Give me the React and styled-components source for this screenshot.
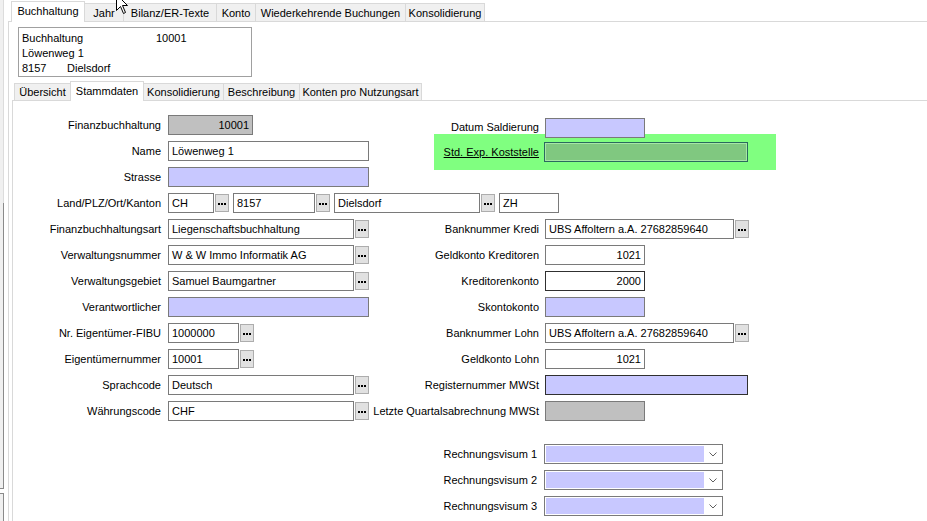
import React from 'react';
import styled, { createGlobalStyle } from 'styled-components';

const GlobalStyle = createGlobalStyle`
  html, body { margin: 0; height: 100%; background: #fff; overflow: hidden; }
  body { font-family: "Liberation Sans", Arial, sans-serif; font-size: 11px; color: #000; }
  #root { height: 100%; }
`;

const LAVENDER = '#c8c8ff';
const GREY = '#c0c0c0';

const Screen = styled.div`
  position: relative;
  display: flex;
  width: 927px;
  height: 521px;
  overflow: hidden;
`;

const SideEdge = styled.div`
  width: 4px;
  margin-right: 4px;
  display: flex;
  flex-direction: column;
`;

const SidePane = styled.div`
  box-sizing: border-box;
  height: ${p => (p.h ? `${p.h}px` : 'auto')};
  flex: ${p => (p.grow ? 1 : 'none')};
  margin-top: ${p => p.mt || 0}px;
  background: #f0f0f0;
  border-right: 1px solid ${p => (p.framed ? '#8a8a8a' : '#dcdcdc')};
  border-bottom: ${p => (p.closed ? '1px solid #8a8a8a' : 'none')};
  border-top: ${p => (p.opened ? '1px solid #8a8a8a' : 'none')};
`;

const Main = styled.div`
  flex: 1;
  display: flex;
  flex-direction: column;
  min-width: 0;
`;

const TabStrip = styled.div`
  display: flex;
  align-items: flex-end;
  height: ${p => p.h}px;
  padding-left: ${p => p.pl}px;
  border-bottom: 1px solid #d9d9d9;
`;

const Tab = styled.div`
  box-sizing: border-box;
  position: relative;
  z-index: ${p => (p.active ? 1 : 0)};
  width: ${p => p.w}px;
  height: ${p => (p.active ? p.h : p.h - 3)}px;
  margin-left: ${p => (p.first ? 0 : -1)}px;
  margin-bottom: ${p => (p.active ? -1 : 0)}px;
  border: 1px solid #d9d9d9;
  border-bottom: none;
  background: ${p => (p.active ? '#fff' : '#f0f0f0')};
  display: flex;
  align-items: center;
  justify-content: center;
  padding-bottom: ${p => (p.active ? 2 : 0)}px;
  white-space: nowrap;
`;

const OuterPanel = styled.div`
  flex: 1;
  display: flex;
  flex-direction: column;
  border-left: 1px solid #d9d9d9;
`;

const InfoBox = styled.div`
  box-sizing: border-box;
  width: 234px;
  height: 50px;
  margin: 5px 0 0 9px;
  padding: 3px 3px 0;
  border: 1px solid #a0a0a0;
  line-height: 15px;
`;

const InfoRow = styled.div`
  display: flex;
  white-space: nowrap;
`;

const InfoCell = styled.span`
  width: ${p => (p.w ? `${p.w}px` : 'auto')};
`;

const InnerTabs = styled.div`
  flex: 1;
  display: flex;
  flex-direction: column;
  margin: 3px 0 0 3px;
`;

const InnerPanel = styled.div`
  flex: 1;
  border-left: 1px solid #d9d9d9;
`;

const Form = styled.div`
  padding-top: 11px;
  display: flex;
  flex-direction: column;
`;

const Row = styled.div`
  display: grid;
  grid-template-columns: 155px 266px 111px 1fr;
  height: 26px;
  align-items: center;
  margin-top: ${p => p.gap || 0}px;
`;

const Label = styled.div`
  grid-column: ${p => p.col || 'auto'};
  display: flex;
  justify-content: flex-end;
  padding-right: ${p => p.pr || 7}px;
  margin-top: ${p => p.low || 0}px;
  white-space: nowrap;
  min-width: 0;
`;

const Field = styled.div`
  grid-column: ${p => p.span || 'auto'};
  display: flex;
  align-items: center;
  margin-top: ${p => p.low || 0}px;
`;

const Box = styled.div`
  box-sizing: border-box;
  position: relative;
  width: ${p => p.w}px;
  height: 20px;
  margin-left: ${p => p.ml || 0}px;
  padding: 0 3px;
  border: 1px solid ${p => (p.dark ? '#303030' : '#7a7a7a')};
  background: ${p => p.tone || '#fff'};
  display: flex;
  align-items: center;
  justify-content: ${p => (p.right ? 'flex-end' : 'flex-start')};
  white-space: nowrap;
  overflow: hidden;
`;

const MoreButton = styled.div`
  box-sizing: border-box;
  width: 14px;
  height: 18px;
  margin-left: 1px;
  background: #e1e1e1;
  border: 1px solid #adadad;
  display: flex;
  align-items: center;
  justify-content: center;
  padding-top: 2px;
`;

const Dot = styled.i`
  display: block;
  width: 2px;
  height: 2px;
  margin: 0 0.5px;
  background: #000;
`;

const Highlight = styled.div`
  grid-column: 3 / 5;
  align-self: stretch;
  margin: -4px 0 -6px;
  width: 342px;
  background: #80ff80;
  display: grid;
  grid-template-columns: 110px 1fr;
  align-items: center;
`;

const LinkLabel = styled.span`
  justify-self: end;
  padding-right: 5px;
  text-decoration: underline;
  white-space: nowrap;
`;

const GreenBox = styled.div`
  box-sizing: border-box;
  width: 204px;
  height: 20px;
  border: 1px solid #2a6a5e;
  box-shadow: inset 0 0 0 1px #a6e6a6;
  background: #80c880;
`;

const Combo = styled.div`
  box-sizing: border-box;
  width: 179px;
  height: 20px;
  margin-left: -1px;
  border: 1px solid #7a7a7a;
  background: #fff;
  display: flex;
  padding: 1px;
`;

const ComboFill = styled.div`
  flex: 1;
  background: ${LAVENDER};
`;

const ComboArrow = styled.div`
  width: 17px;
  display: flex;
  align-items: center;
  justify-content: center;
`;

const Cursor = styled.svg`
  position: absolute;
  left: 116px;
  top: -6px;
  width: 13px;
  height: 21px;
`;

const More = () => (
  <MoreButton>
    <Dot />
    <Dot />
    <Dot />
  </MoreButton>
);

const Dropdown = () => (
  <Combo>
    <ComboFill />
    <ComboArrow>
      <svg width="8" height="5" viewBox="0 0 8 5">
        <path d="M0.5 0.5 L4 4 L7.5 0.5" fill="none" stroke="#606060" strokeWidth="1" />
      </svg>
    </ComboArrow>
  </Combo>
);

const outerTabs = [
  { label: 'Buchhaltung', w: 74, active: true },
  { label: 'Jahr', w: 40 },
  { label: 'Bilanz/ER-Texte', w: 94 },
  { label: 'Konto', w: 40 },
  { label: 'Wiederkehrende Buchungen', w: 151 },
  { label: 'Konsolidierung', w: 80 },
];

const innerTabs = [
  { label: 'Übersicht', w: 57 },
  { label: 'Stammdaten', w: 74, active: true },
  { label: 'Konsolidierung', w: 81 },
  { label: 'Beschreibung', w: 77 },
  { label: 'Konten pro Nutzungsart', w: 123 },
];

export default function App() {
  return (
    <>
      <GlobalStyle />
      <Screen>
        <SideEdge>
          <SidePane h={203} />
          <SidePane h={286} framed closed />
          <SidePane grow framed opened mt={4} />
        </SideEdge>

        <Main>
          <TabStrip h={21} pl={3}>
            {outerTabs.map((t, i) => (
              <Tab key={t.label} h={21} w={t.w} first={i === 0} active={t.active}>
                {t.label}
              </Tab>
            ))}
          </TabStrip>

          <OuterPanel>
            <InfoBox>
              <InfoRow>
                <InfoCell w={134}>Buchhaltung</InfoCell>
                <InfoCell>10001</InfoCell>
              </InfoRow>
              <InfoRow>
                <InfoCell>Löwenweg 1</InfoCell>
              </InfoRow>
              <InfoRow>
                <InfoCell w={45}>8157</InfoCell>
                <InfoCell>Dielsdorf</InfoCell>
              </InfoRow>
            </InfoBox>

            <InnerTabs>
              <TabStrip h={20} pl={2}>
                {innerTabs.map((t, i) => (
                  <Tab key={t.label} h={20} w={t.w} first={i === 0} active={t.active}>
                    {t.label}
                  </Tab>
                ))}
              </TabStrip>

              <InnerPanel>
                <Form>
                  <Row>
                    <Label>Finanzbuchhaltung</Label>
                    <Field>
                      <Box w={85} tone={GREY} right>10001</Box>
                    </Field>
                    <Label pr={6} low={4}>Datum Saldierung</Label>
                    <Field low={5}>
                      <Box w={100} tone={LAVENDER} />
                    </Field>
                  </Row>

                  <Row>
                    <Label>Name</Label>
                    <Field>
                      <Box w={201}>Löwenweg 1</Box>
                    </Field>
                    <Highlight>
                      <LinkLabel>Std. Exp. Koststelle</LinkLabel>
                      <GreenBox />
                    </Highlight>
                  </Row>

                  <Row>
                    <Label>Strasse</Label>
                    <Field>
                      <Box w={201} tone={LAVENDER} />
                    </Field>
                  </Row>

                  <Row>
                    <Label>Land/PLZ/Ort/Kanton</Label>
                    <Field span="2 / 5">
                      <Box w={46}>CH</Box>
                      <More />
                      <Box w={82} ml={4}>8157</Box>
                      <More />
                      <Box w={146} ml={4}>Dielsdorf</Box>
                      <More />
                      <Box w={60} ml={4}>ZH</Box>
                    </Field>
                  </Row>

                  <Row>
                    <Label>Finanzbuchhaltungsart</Label>
                    <Field>
                      <Box w={186}>Liegenschaftsbuchhaltung</Box>
                      <More />
                    </Field>
                    <Label pr={6}>Banknummer Kredi</Label>
                    <Field>
                      <Box w={189}>UBS Affoltern a.A. 27682859640</Box>
                      <More />
                    </Field>
                  </Row>

                  <Row>
                    <Label>Verwaltungsnummer</Label>
                    <Field>
                      <Box w={186}>W &amp; W Immo Informatik AG</Box>
                      <More />
                    </Field>
                    <Label pr={6}>Geldkonto Kreditoren</Label>
                    <Field>
                      <Box w={100} right>1021</Box>
                    </Field>
                  </Row>

                  <Row>
                    <Label>Verwaltungsgebiet</Label>
                    <Field>
                      <Box w={186}>Samuel Baumgartner</Box>
                      <More />
                    </Field>
                    <Label pr={6}>Kreditorenkonto</Label>
                    <Field>
                      <Box w={100} right dark>2000</Box>
                    </Field>
                  </Row>

                  <Row>
                    <Label>Verantwortlicher</Label>
                    <Field>
                      <Box w={201} tone={LAVENDER} />
                    </Field>
                    <Label pr={6}>Skontokonto</Label>
                    <Field>
                      <Box w={100} tone={LAVENDER} />
                    </Field>
                  </Row>

                  <Row>
                    <Label>Nr. Eigentümer-FIBU</Label>
                    <Field>
                      <Box w={71}>1000000</Box>
                      <More />
                    </Field>
                    <Label pr={6}>Banknummer Lohn</Label>
                    <Field>
                      <Box w={189}>UBS Affoltern a.A. 27682859640</Box>
                      <More />
                    </Field>
                  </Row>

                  <Row>
                    <Label>Eigentümernummer</Label>
                    <Field>
                      <Box w={71}>10001</Box>
                      <More />
                    </Field>
                    <Label pr={6}>Geldkonto Lohn</Label>
                    <Field>
                      <Box w={100} right>1021</Box>
                    </Field>
                  </Row>

                  <Row>
                    <Label>Sprachcode</Label>
                    <Field>
                      <Box w={186}>Deutsch</Box>
                      <More />
                    </Field>
                    <Label pr={6}>Registernummer MWSt</Label>
                    <Field>
                      <Box w={203} tone={LAVENDER} dark />
                    </Field>
                  </Row>

                  <Row>
                    <Label>Währungscode</Label>
                    <Field>
                      <Box w={186}>CHF</Box>
                      <More />
                    </Field>
                    <Label pr={6}>Letzte Quartalsabrechnung MWSt</Label>
                    <Field>
                      <Box w={100} tone={GREY} />
                    </Field>
                  </Row>

                  {[1, 2, 3].map(n => (
                    <Row key={n} gap={n === 1 ? 17 : 0}>
                      <Label col={3} pr={8}>Rechnungsvisum {n}</Label>
                      <Field>
                        <Dropdown />
                      </Field>
                    </Row>
                  ))}
                </Form>
              </InnerPanel>
            </InnerTabs>
          </OuterPanel>
        </Main>

        <Cursor viewBox="0 0 13 21">
          <path
            d="M0.5 0.5 L0.5 16.5 L4.5 12.5 L7.5 19.5 L9.5 18.5 L6.5 11.5 L11.5 11.5 Z"
            fill="#fff"
            stroke="#000"
            strokeWidth="1"
          />
        </Cursor>
      </Screen>
    </>
  );
}
